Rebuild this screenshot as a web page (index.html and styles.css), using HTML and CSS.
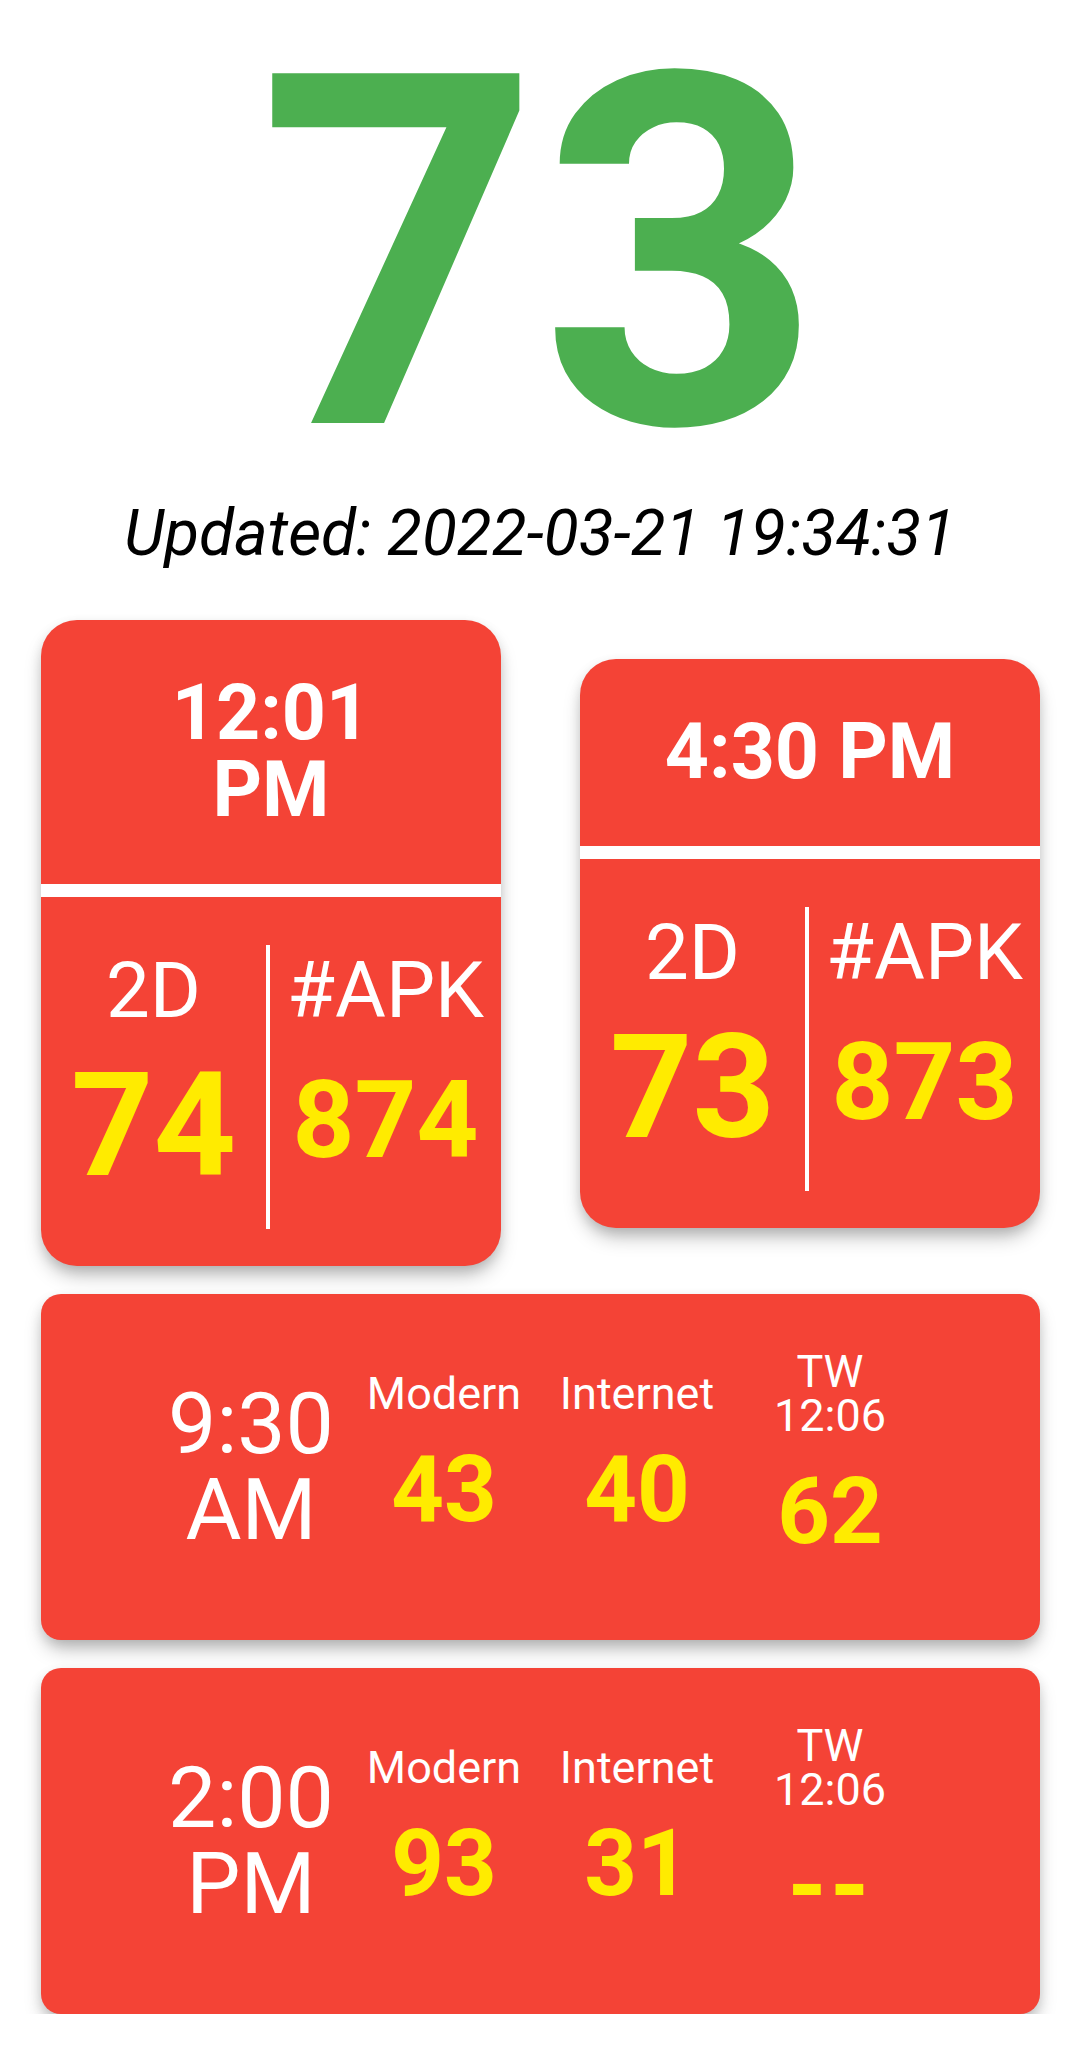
FILE: index.html
```html
<!DOCTYPE html>
<html>
<head>
    <title>2D Live</title>
    <link rel="stylesheet" href="styles.css">
</head>
<body>
<div class="hero">73</div>
<p class="updated">Updated: 2022-03-21 19:34:31</p>

<div class="top-row">
    <div class="card draw">
        <div class="draw-time">12:01<br>PM</div>
        <div class="draw-body">
            <div class="draw-col">
                <div class="label">2D</div>
                <div class="num-2d">74</div>
            </div>
            <div class="vline"></div>
            <div class="draw-col">
                <div class="label">#APK</div>
                <div class="num-apk">874</div>
            </div>
        </div>
    </div>
    <div class="card draw">
        <div class="draw-time">4:30 PM</div>
        <div class="draw-body">
            <div class="draw-col">
                <div class="label">2D</div>
                <div class="num-2d">73</div>
            </div>
            <div class="vline"></div>
            <div class="draw-col">
                <div class="label">#APK</div>
                <div class="num-apk">873</div>
            </div>
        </div>
    </div>
</div>

<div class="card wide">
    <div class="wide-time">9:30<br>AM</div>
    <div class="wide-col">
        <div class="small-label">Modern</div>
        <div class="wide-num">43</div>
    </div>
    <div class="wide-col">
        <div class="small-label">Internet</div>
        <div class="wide-num">40</div>
    </div>
    <div class="wide-col">
        <div class="small-label">TW<br>12:06</div>
        <div class="wide-num">62</div>
    </div>
</div>

<div class="card wide">
    <div class="wide-time">2:00<br>PM</div>
    <div class="wide-col">
        <div class="small-label">Modern</div>
        <div class="wide-num">93</div>
    </div>
    <div class="wide-col">
        <div class="small-label">Internet</div>
        <div class="wide-num">31</div>
    </div>
    <div class="wide-col">
        <div class="small-label">TW<br>12:06</div>
        <div class="wide-num empty">--</div>
    </div>
</div>
</body>
</html>
```

FILE: styles.css
```css
body {
    margin: 0;
    background-color: #ffffff;
    font-family: Roboto, "Noto Sans", sans-serif;
    color: #ffffff;
}

.hero {
    padding-top: 55px;
    height: 400px;
    line-height: 400px;
    font-size: 492px;
    font-weight: bold;
    color: #4CAF50;
    text-align: center;
}

.updated {
    margin: 41px 0 0;
    font-size: 64px;
    font-style: italic;
    color: #000000;
    text-align: center;
}

.card {
    background-color: #F44336;
    box-shadow: 0 12px 20px -4px rgba(0, 0, 0, 0.28), 0 4px 12px rgba(0, 0, 0, 0.1);
}

.top-row {
    display: grid;
    grid-template-columns: 460px 460px;
    column-gap: 79px;
    align-items: center;
    margin-top: 49px;
    padding-left: 41px;
}

.draw {
    border-radius: 36px;
    overflow: hidden;
}

.draw-time {
    padding: 55px 0;
    border-bottom: 13px solid #ffffff;
    font-size: 77px;
    line-height: 77px;
    font-weight: bold;
    text-align: center;
}

.draw-body {
    display: grid;
    grid-template-columns: 225px 4px 1fr;
    padding: 48px 0 37px;
}

.draw-col {
    height: 284px;
    text-align: center;
}

.vline {
    background-color: #ffffff;
}

.label {
    font-size: 78px;
}

.num-2d {
    margin-top: 5px;
    font-size: 144px;
    font-weight: bold;
    color: #FFEB00;
}

.num-apk {
    margin-top: 21px;
    font-size: 108px;
    font-weight: bold;
    color: #FFEB00;
}

.wide {
    display: grid;
    grid-template-columns: repeat(4, 193px);
    justify-content: center;
    align-items: center;
    height: 346px;
    margin: 28px 40px 0 41px;
    border-radius: 20px;
}

.wide-time {
    font-size: 86px;
    line-height: 86px;
    text-align: center;
}

.wide-col {
    padding-bottom: 26px;
    text-align: center;
}

.small-label {
    font-size: 45px;
    line-height: 44px;
}

.wide-num {
    margin-top: 28px;
    font-size: 92px;
    line-height: 92px;
    font-weight: bold;
    color: #FFEB00;
}

.wide-num.empty {
    font-size: 100px;
    letter-spacing: 3px;
}
```
